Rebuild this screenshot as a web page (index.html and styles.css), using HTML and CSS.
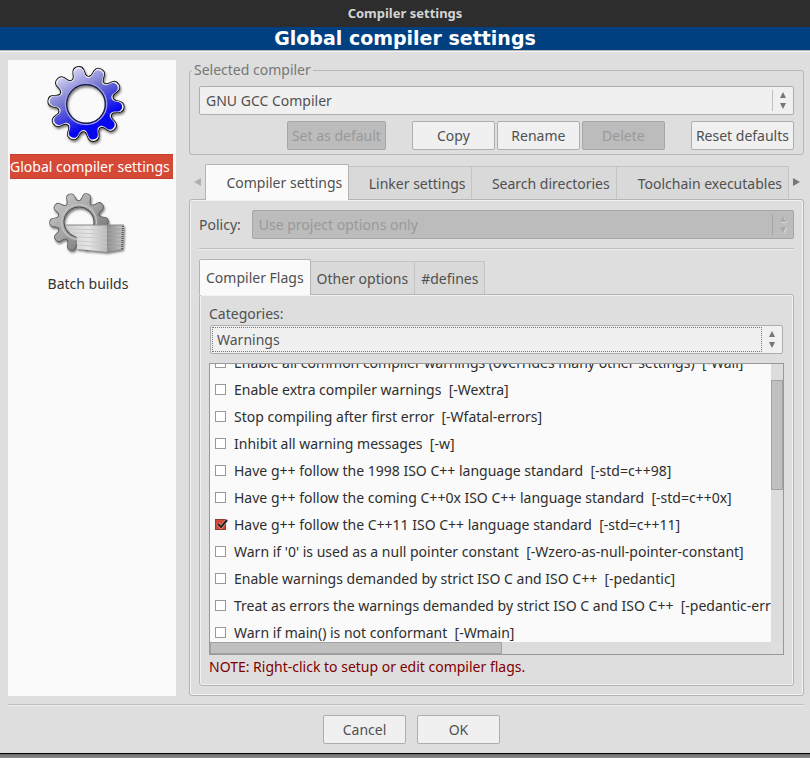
FILE: index.html
```html
<!DOCTYPE html>
<html lang="en">
<head>
<meta charset="utf-8">
<title>Compiler settings</title>
<link rel="stylesheet" href="styles.css">
</head>
<body>
<div class="window">
  <header class="titlebar">Compiler settings</header>
  <h1 class="banner">Global compiler settings</h1>

  <div class="body">
    <nav class="sidebar">
      <a class="category" href="#global">
        <svg class="category-icon" width="84" height="84" viewBox="-42 -42 84 84" aria-hidden="true">
          <defs>
            <path id="tooth" d="M0 0L-8.6-26C-4.6-27.4-5.6-32-4.9-34.4C-4-39.4 4-39.4 4.9-34.4C5.6-32 4.6-27.4 8.6-26Z"/>
            <g id="gear">
              <use href="#tooth" transform="rotate(-13)"/><use href="#tooth" transform="rotate(23)"/>
              <use href="#tooth" transform="rotate(59)"/><use href="#tooth" transform="rotate(95)"/>
              <use href="#tooth" transform="rotate(131)"/><use href="#tooth" transform="rotate(167)"/>
              <use href="#tooth" transform="rotate(203)"/><use href="#tooth" transform="rotate(239)"/>
              <use href="#tooth" transform="rotate(275)"/><use href="#tooth" transform="rotate(311)"/>
            </g>
            <mask id="gear-mask" maskUnits="userSpaceOnUse" x="-42" y="-42" width="84" height="84">
              <use href="#gear" fill="#fff"/>
            </mask>
            <mask id="hole-mask" maskUnits="userSpaceOnUse" x="-42" y="-42" width="84" height="84">
              <rect x="-42" y="-42" width="84" height="84" fill="#fff"/>
              <circle r="19" fill="#000"/>
            </mask>
            <linearGradient id="blue" gradientUnits="userSpaceOnUse" x1="-18" y1="-34" x2="10" y2="18">
              <stop offset="0" stop-color="#d4d4f4"/><stop offset=".45" stop-color="#7777d0"/>
              <stop offset="1" stop-color="#0808ee"/>
            </linearGradient>
            <linearGradient id="rim" gradientUnits="userSpaceOnUse" x1="-20" y1="-34" x2="20" y2="34">
              <stop offset="0" stop-color="#fff"/><stop offset=".45" stop-color="#dcdcfa"/>
              <stop offset="1" stop-color="#5050f0"/>
            </linearGradient>
          </defs>
          <g class="shadowed" transform="scale(.98)">
            <g mask="url(#hole-mask)">
              <use href="#gear" fill="#111" stroke="#111" stroke-width="2.6"/>
              <use href="#gear" fill="url(#rim)" stroke="url(#rim)" stroke-width=".8"/>
              <g transform="scale(.97)"><g mask="url(#gear-mask)"><rect x="-42" y="-42" width="84" height="84" fill="url(#blue)"/></g></g>
              <circle r="21" fill="none" stroke="#9a9af0" stroke-width="1.6"/>
              <circle r="19.6" fill="none" stroke="#181830" stroke-width="1.4"/>
            </g>
          </g>
        </svg>
        <span class="category-name selected">Global compiler settings</span>
      </a>
      <a class="category" href="#batch">
        <svg class="category-icon" width="84" height="84" viewBox="0 0 84 84" aria-hidden="true">
          <defs>
            <linearGradient id="grey" gradientUnits="userSpaceOnUse" x1="-24" y1="-34" x2="24" y2="34">
              <stop offset="0" stop-color="#c4c4c4"/><stop offset=".5" stop-color="#a2a2a2"/>
              <stop offset="1" stop-color="#6c6c6c"/>
            </linearGradient>
            <linearGradient id="paper" x1="0" y1="0" x2="1" y2="0">
              <stop offset="0" stop-color="#cccccc"/><stop offset=".55" stop-color="#e6e6e6"/>
              <stop offset="1" stop-color="#b8b8b8"/>
            </linearGradient>
            <linearGradient id="edge" x1="0" y1="0" x2="1" y2="0">
              <stop offset="0" stop-color="#8c8c8c"/><stop offset="1" stop-color="#c6c6c6"/>
            </linearGradient>
          </defs>
          <g class="shadowed">
            <g transform="translate(35 41) rotate(-6) scale(.76)">
              <g mask="url(#hole-mask)">
                <use href="#gear" fill="#555" stroke="#5c5c5c" stroke-width="2"/>
                <g mask="url(#gear-mask)"><rect x="-42" y="-42" width="84" height="84" fill="url(#grey)"/></g>
                <circle r="23" fill="none" stroke="#c0c0c0" stroke-width="2"/>
                <circle r="19.6" fill="none" stroke="#4c4c4c" stroke-width="1.6"/>
              </g>
            </g>
            <path d="M22 44L63 44V71L33 68V56C28 54 24 51 22 44Z" fill="url(#paper)"/>
            <path d="M63 44L80 44L79 68L63 71Z" fill="url(#edge)"/>
            <path d="M23 48L63 49M26 52L63 53M33 56L63 57M33 60L63 62M33 64L63 66" stroke="#cacaca" fill="none"/>
            <path d="M64 49L79 48M64 53L79 52M64 57L79 56M64 62L79 60M64 66L79 64" stroke="#a4a4a4" fill="none"/>
            <path d="M79 45L78 69" stroke="#555" stroke-width="2" stroke-dasharray="1 1" fill="none"/>
            <path d="M22 44H80" stroke="#8a8a8a" fill="none"/>
          </g>
        </svg>
        <span class="category-name">Batch builds</span>
      </a>
    </nav>

    <main class="content">
      <fieldset class="group">
        <legend>Selected compiler</legend>
        <div class="combo">
          <select aria-label="Selected compiler"><option>GNU GCC Compiler</option></select>
          <svg class="arrows" width="6" height="17" viewBox="0 0 6 17" aria-hidden="true"><path d="M3 0L6 6H0ZM0 11H6L3 17Z"/></svg>
        </div>
        <div class="actions">
          <button class="button" disabled>Set as default</button>
          <div class="action-set">
            <button class="button">Copy</button>
            <button class="button">Rename</button>
            <button class="button" disabled>Delete</button>
          </div>
          <button class="button">Reset defaults</button>
        </div>
      </fieldset>

      <div class="tab-strip">
        <button class="scroll-tab" aria-label="Previous tabs" disabled><svg width="7" height="8" viewBox="0 0 7 8"><path d="M7 0V8L0 4Z"/></svg></button>
        <div class="tabs main-tabs" role="tablist">
          <button class="tab active" role="tab" aria-selected="true">Compiler settings</button>
          <button class="tab" role="tab">Linker settings</button>
          <button class="tab" role="tab">Search directories</button>
          <button class="tab" role="tab">Toolchain executables</button>
        </div>
        <button class="scroll-tab" aria-label="Next tabs"><svg width="7" height="8" viewBox="0 0 7 8"><path d="M0 0V8L7 4Z"/></svg></button>
      </div>

      <section class="panel outer">
        <div class="policy">
          <label for="policy">Policy:</label>
          <div class="combo disabled">
            <select id="policy" disabled><option>Use project options only</option></select>
            <svg class="arrows" width="6" height="17" viewBox="0 0 6 17" aria-hidden="true"><path d="M3 0L6 6H0ZM0 11H6L3 17Z"/></svg>
          </div>
        </div>
        <hr class="rule">
        <div class="tabs flag-tabs" role="tablist">
          <button class="tab active" role="tab" aria-selected="true">Compiler Flags</button>
          <button class="tab" role="tab">Other options</button>
          <button class="tab" role="tab">#defines</button>
        </div>
        <section class="panel inner">
          <label for="categories">Categories:</label>
          <div class="combo focused">
            <select id="categories"><option>Warnings</option></select>
            <svg class="arrows" width="6" height="17" viewBox="0 0 6 17" aria-hidden="true"><path d="M3 0L6 6H0ZM0 11H6L3 17Z"/></svg>
          </div>
          <div class="flag-list">
            <div class="viewport">
              <div class="flags">
                <label class="flag"><input type="checkbox">Enable all common compiler warnings (overrides many other settings)  [-Wall]</label>
                <label class="flag"><input type="checkbox">Enable extra compiler warnings  [-Wextra]</label>
                <label class="flag"><input type="checkbox">Stop compiling after first error  [-Wfatal-errors]</label>
                <label class="flag"><input type="checkbox">Inhibit all warning messages  [-w]</label>
                <label class="flag"><input type="checkbox">Have g++ follow the 1998 ISO C++ language standard  [-std=c++98]</label>
                <label class="flag"><input type="checkbox">Have g++ follow the coming C++0x ISO C++ language standard  [-std=c++0x]</label>
                <label class="flag"><span class="tick"><input type="checkbox" checked><svg width="13" height="12" viewBox="0 0 13 12" aria-hidden="true"><path class="halo" d="M3 5L6 8L12 1"/><path class="mark" d="M3 5L6 8L12 1"/></svg></span>Have g++ follow the C++11 ISO C++ language standard  [-std=c++11]</label>
                <label class="flag"><input type="checkbox">Warn if '0' is used as a null pointer constant  [-Wzero-as-null-pointer-constant]</label>
                <label class="flag"><input type="checkbox">Enable warnings demanded by strict ISO C and ISO C++  [-pedantic]</label>
                <label class="flag"><input type="checkbox">Treat as errors the warnings demanded by strict ISO C and ISO C++  [-pedantic-errors]</label>
                <label class="flag"><input type="checkbox">Warn if main() is not conformant  [-Wmain]</label>
              </div>
            </div>
            <div class="track vertical"><div class="thumb"></div></div>
            <div class="track horizontal"><div class="thumb"></div></div>
          </div>
          <p class="note">NOTE: Right-click to setup or edit compiler flags.</p>
        </section>
      </section>
    </main>
  </div>

  <hr class="rule footer-rule">
  <footer class="footer">
    <button class="button">Cancel</button>
    <button class="button">OK</button>
  </footer>
</div>
</body>
</html>
```
FILE: styles.css
```css
* { box-sizing: border-box; }

html {
  min-height: 100vh;
  background: linear-gradient(#6c6c6c, #8c8c8c) bottom / 100% 4px no-repeat #dedede;
}

body {
  margin: 0;
  color: #505050;
  font: 14px/20px "Noto Sans", "Open Sans", sans-serif;
}

button, select { font: inherit; color: inherit; margin: 0; }

.window {
  display: flex;
  flex-direction: column;
  min-height: calc(100vh - 4px);
  background: #dedede;
  border-bottom: 1px solid #000;
}

.titlebar {
  height: 27px;
  background: #2d2d2d;
  color: #d4d4d4;
  font-size: 13px;
  font-weight: bold;
  line-height: 27px;
  text-align: center;
}

.banner {
  margin: 0;
  height: 23px;
  background: #004080;
  color: #fff;
  font: bold 19px/23px "DejaVu Sans", sans-serif;
  text-align: center;
}

.body {
  flex: 1;
  display: grid;
  grid-template-columns: 168px minmax(0, 1fr);
  gap: 13px;
  padding: 8px 6px 8px 8px;
  border-top: 1px solid #b4b4b4;
  box-shadow: inset 0 1px #f4f4f4;
}

.sidebar { background: #fafafa; margin-top: 1px; padding: 2px 3px 2px 2px; }

.category {
  display: flex;
  flex-direction: column;
  align-items: center;
  color: #333;
  text-decoration: none;
}

.category-icon { margin: 0 12px 8px 0; }
.category + .category .category-icon { margin: 2px 12px 6px 0; }
.category-name { padding: 3px 12px 3px 5px; line-height: 20px; white-space: nowrap; }
.category-name.selected {
  width: 100%;
  padding: 2px 0 1px;
  background: #d64937;
  color: #fff;
  border: solid #c43e2d;
  border-width: 1px 0;
}

.shadowed { filter: drop-shadow(1px 2px 1px rgba(0, 0, 0, .5)); }

.content { display: flex; flex-direction: column; min-width: 0; }

.group {
  margin: 1px 0 9px;
  padding: 6px 9px 4px 9px;
  border: 1px solid #b6b6b6;
  border-radius: 3px;
  min-width: 0;
}
.group legend { padding: 0 2px; margin-left: -7px; color: #777; }

.combo {
  display: flex;
  align-items: center;
  flex: 1;
  height: 29px;
  padding-right: 7px;
  border: 1px solid #adadad;
  border-radius: 2px;
  background: #f0f0f0;
}
.combo select {
  flex: 1;
  min-width: 0;
  height: 21px;
  padding: 0 6px;
  border: 0;
  border-right: 1px solid #c0c0c0;
  background: none;
  appearance: none;
  outline: 0;
}
.arrows { margin-left: 7px; fill: #777; }
.combo.disabled { background: #bcbcbc; border-color: #a6a6a6; }
.combo.disabled select { color: #999; opacity: 1; border-color: #a4a4a4; }
.combo.disabled .arrows { fill: #aaa; filter: drop-shadow(1px 1px #d8d8d8); }
.combo.focused select {
  height: 25px;
  margin-left: 1px;
  padding: 0 4px;
  border: 1px dotted #777;
}

.actions { display: flex; justify-content: flex-end; gap: 26px; margin-top: 6px; }
.action-set { display: flex; gap: 2px; }

.button {
  min-width: 83px;
  height: 29px;
  padding: 0 4px;
  border: 1px solid #aeaeae;
  border-radius: 2px;
  background: #f0f0f0;
  white-space: nowrap;
}
.button:disabled { background: #bcbcbc; border-color: #a6a6a6; color: #999; }

.tab-strip { display: flex; align-items: center; padding-left: 1px; }
.scroll-tab {
  display: flex;
  justify-content: center;
  width: 15px;
  padding: 0;
  border: 0;
  background: none;
  fill: #777;
}
.scroll-tab:disabled { fill: #b0b0b0; }

.tabs { position: relative; z-index: 1; display: flex; align-items: flex-end; margin-bottom: -1px; }
.main-tabs { flex: 1; display: grid; grid-template-columns: 144fr 123fr 144fr 172fr; }
.tab {
  height: 33px;
  padding: 2px 6px 0;
  border: solid #c4c4c4;
  border-width: 1px 1px 0 0;
  background: #d9d9d9;
  white-space: nowrap;
  margin-bottom: 1px;
}
.main-tabs .tab { padding-left: 18px; text-align: right; }
.tab.active {
  height: 36px;
  padding-top: 0;
  margin-bottom: 0;
  background: #fafafa;
  border: 1px solid #b4b4b4;
  border-bottom: 0;
  border-radius: 2px 2px 0 0;
}

.panel {
  display: flex;
  flex-direction: column;
  flex: 1;
  border: 1px solid #b4b4b4;
  border-radius: 3px;
  box-shadow: inset 0 0 0 1px #f2f2f2;
}
.outer { padding: 10px 9px 9px; }
.inner { padding: 9px 9px 8px; }

.policy { display: flex; align-items: center; gap: 11px; }
.rule { margin: 9px 0; width: 100%; height: 2px; border: solid #bebebe; border-width: 1px 0 0; background: #eee; }

.flag-list {
  flex: 1;
  display: grid;
  grid-template-columns: minmax(0, 1fr) 12px;
  grid-template-rows: minmax(0, 1fr) 12px;
  margin-top: 9px;
  border: 1px solid #999;
}
.inner .combo { flex: none; margin: 1px 1px 0; }
.viewport { overflow: hidden; min-height: 0; background: #fafafa; }
.flags { margin: -15px 0 -20px; }
.flag {
  display: flex;
  align-items: center;
  height: 27px;
  padding-left: 5px;
  gap: 8px;
  color: #2e2e2e;
  white-space: pre;
}
.flag input {
  appearance: none;
  flex: none;
  width: 11px;
  height: 11px;
  margin: 0;
  border: 1px solid #999;
  background: #fff;
}
.tick { position: relative; display: flex; }
.tick input:checked { background: #d64937; border-color: #8e3a30; }
.tick svg { position: absolute; left: 0; top: 0; fill: none; }
.halo { stroke: #eec0b8; stroke-width: 3; }
.mark { stroke: #222; stroke-width: 2; }

.track { background: #dcdcdc; }
.thumb { background: #c0c0c0; border: 1px solid #a2a2a2; }
.vertical { padding-top: 16px; }
.vertical .thumb { height: 110px; }
.horizontal .thumb { width: 52%; height: 12px; }
.note { margin: 2px 0 0; color: #800000; }

.footer-rule { width: auto; margin: 0 6px 9px 8px; }
.footer { display: flex; justify-content: center; gap: 11px; padding: 0 0 9px 13px; }
```
